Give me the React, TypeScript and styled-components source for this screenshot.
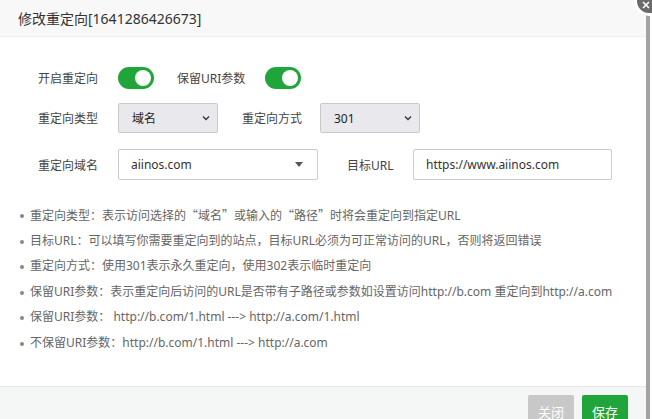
import React from "react";
import styled, { createGlobalStyle } from "styled-components";

const GlobalStyle = createGlobalStyle`
  html, body {
    margin: 0;
    padding: 0;
    background: #fff;
  }
  body {
    font-family: "Noto Sans", "Noto Sans CJK SC", sans-serif;
    color: #333;
  }
  * { box-sizing: border-box; }
`;

const Page = styled.div`
  position: relative;
  display: flex;
  width: 652px;
  height: 419px;
  overflow: hidden;
  background: #fff;
`;

const Dialog = styled.div`
  width: 646px;
  height: 419px;
  display: flex;
  flex-direction: column;
  background: #fff;
`;

const ScrollEdge = styled.div`
  width: 4px;
  background: #a3a3a3;
  margin-top: 10px;
`;

const CloseBtn = styled.div`
  position: absolute;
  top: -14px;
  right: -12px;
  width: 30px;
  height: 30px;
  border-radius: 50%;
  background: #6b6b6b;
  border: 3px solid #fff;
  display: flex;
  align-items: flex-end;
  justify-content: flex-start;
  padding: 0 0 4px 5px;
`;

const Header = styled.div`
  height: 37px;
  flex-shrink: 0;
  background: #f8f8f8;
  border-bottom: 1px solid #eee;
  padding-left: 18px;
  display: flex;
  align-items: center;
  font-size: 14px;
  color: #333;
`;

const Body = styled.div`
  flex: 1;
  padding: 30px 0 0 38px;
`;

const Row = styled.div<{ $mb: number }>`
  display: flex;
  align-items: center;
  margin-bottom: ${(p) => p.$mb}px;
`;

const Label = styled.div<{ $w: number; $ml?: number }>`
  width: ${(p) => p.$w}px;
  margin-left: ${(p) => p.$ml ?? 0}px;
  font-size: 12px;
  color: #444;
  flex-shrink: 0;
`;

const Switch = styled.div`
  position: relative;
  width: 36px;
  height: 22px;
  border-radius: 11px;
  background: #20a53a;
  &::after {
    content: "";
    position: absolute;
    top: 3px;
    right: 3px;
    width: 16px;
    height: 16px;
    border-radius: 50%;
    background: #fff;
  }
`;

const Select = styled.div<{ $w: number }>`
  width: ${(p) => p.$w}px;
  height: 30px;
  background: #e9e9ed;
  border: 1px solid #c9c9c9;
  border-radius: 2px;
  display: flex;
  align-items: center;
  justify-content: space-between;
  padding: 0 6px 0 13px;
  font-size: 12px;
  color: #222;
`;

const Input = styled.div<{ $w: number }>`
  width: ${(p) => p.$w}px;
  height: 31px;
  border: 1px solid #ccc;
  border-radius: 2px;
  background: #fff;
  display: flex;
  align-items: center;
  justify-content: space-between;
  padding: 0 12px;
  font-size: 12px;
  color: #333;
`;

const Caret = styled.span`
  width: 0;
  height: 0;
  border-left: 4px solid transparent;
  border-right: 4px solid transparent;
  border-top: 5px solid #555;
  margin-right: 2px;
`;

const Tips = styled.ul`
  list-style: none;
  margin: 0;
  padding: 0 0 0 20px;
  margin-top: 22px;
`;

const Tip = styled.li`
  position: relative;
  padding-left: 10px;
  height: 25.6px;
  line-height: 25.6px;
  font-size: 12px;
  color: #666;
  white-space: nowrap;
  &::before {
    content: "";
    position: absolute;
    left: 0;
    top: 12px;
    width: 4px;
    height: 4px;
    border-radius: 50%;
    background: #888;
  }
`;

const Quote = styled.span`
  font-family: "Noto Sans CJK SC", sans-serif;
`;

const Footer = styled.div`
  height: 33px;
  flex-shrink: 0;
  background: #f5f6f6;
  border-top: 1px solid #e8e8e8;
  display: flex;
  justify-content: flex-end;
  align-items: flex-start;
  padding: 8px 18px 0 0;
  gap: 8px;
`;

const Button = styled.div<{ $primary?: boolean }>`
  width: 46px;
  height: 32px;
  border-radius: 2px;
  background: ${(p) => (p.$primary ? "#20a53a" : "#c8c8c8")};
  color: #fff;
  font-size: 13px;
  display: flex;
  align-items: center;
  justify-content: center;
`;

const Spacer = styled.div`
  flex: 1;
`;

const Chevron = () => (
  <svg width="10" height="10" viewBox="0 0 10 10">
    <path d="M2 3.5 L5 6.5 L8 3.5" fill="none" stroke="#333" strokeWidth="1.3" />
  </svg>
);

const tips: React.ReactNode[] = [
  <>
    重定向类型：表示访问选择的<Quote>“域名”</Quote>或输入的<Quote>“路径”</Quote>时将会重定向到指定URL
  </>,
  "目标URL：可以填写你需要重定向到的站点，目标URL必须为可正常访问的URL，否则将返回错误",
  "重定向方式：使用301表示永久重定向，使用302表示临时重定向",
  "保留URI参数：表示重定向后访问的URL是否带有子路径或参数如设置访问http://b.com 重定向到http://a.com",
  "保留URI参数：  http://b.com/1.html ---> http://a.com/1.html",
  "不保留URI参数：http://b.com/1.html ---> http://a.com",
];

export default function App() {
  return (
    <>
      <GlobalStyle />
      <Page>
        <Dialog>
          <Header>修改重定向[1641286426673]</Header>
          <Body>
            <Row $mb={14}>
              <Label $w={80}>开启重定向</Label>
              <Switch />
              <Label $w={88} $ml={23}>保留URI参数</Label>
              <Switch />
            </Row>
            <Row $mb={16}>
              <Label $w={80}>重定向类型</Label>
              <Select $w={100}>
                域名
                <Chevron />
              </Select>
              <Label $w={78} $ml={24}>重定向方式</Label>
              <Select $w={100}>
                301
                <Chevron />
              </Select>
            </Row>
            <Row $mb={0}>
              <Label $w={80}>重定向域名</Label>
              <Input $w={200}>
                aiinos.com
                <Caret />
              </Input>
              <Label $w={66} $ml={29}>目标URL</Label>
              <Input $w={199}>https://www.aiinos.com</Input>
            </Row>
          </Body>
          <Tips>
            {tips.map((t, i) => (
              <Tip key={i}>{t}</Tip>
            ))}
          </Tips>
          <Spacer />
          <Footer>
            <Button>关闭</Button>
            <Button $primary>保存</Button>
          </Footer>
        </Dialog>
        <ScrollEdge />
        <CloseBtn>
          <svg width="8" height="8" viewBox="0 0 8 8">
            <path d="M1 1 L7 7 M7 1 L1 7" stroke="#fff" strokeWidth="1.6" />
          </svg>
        </CloseBtn>
      </Page>
    </>
  );
}
